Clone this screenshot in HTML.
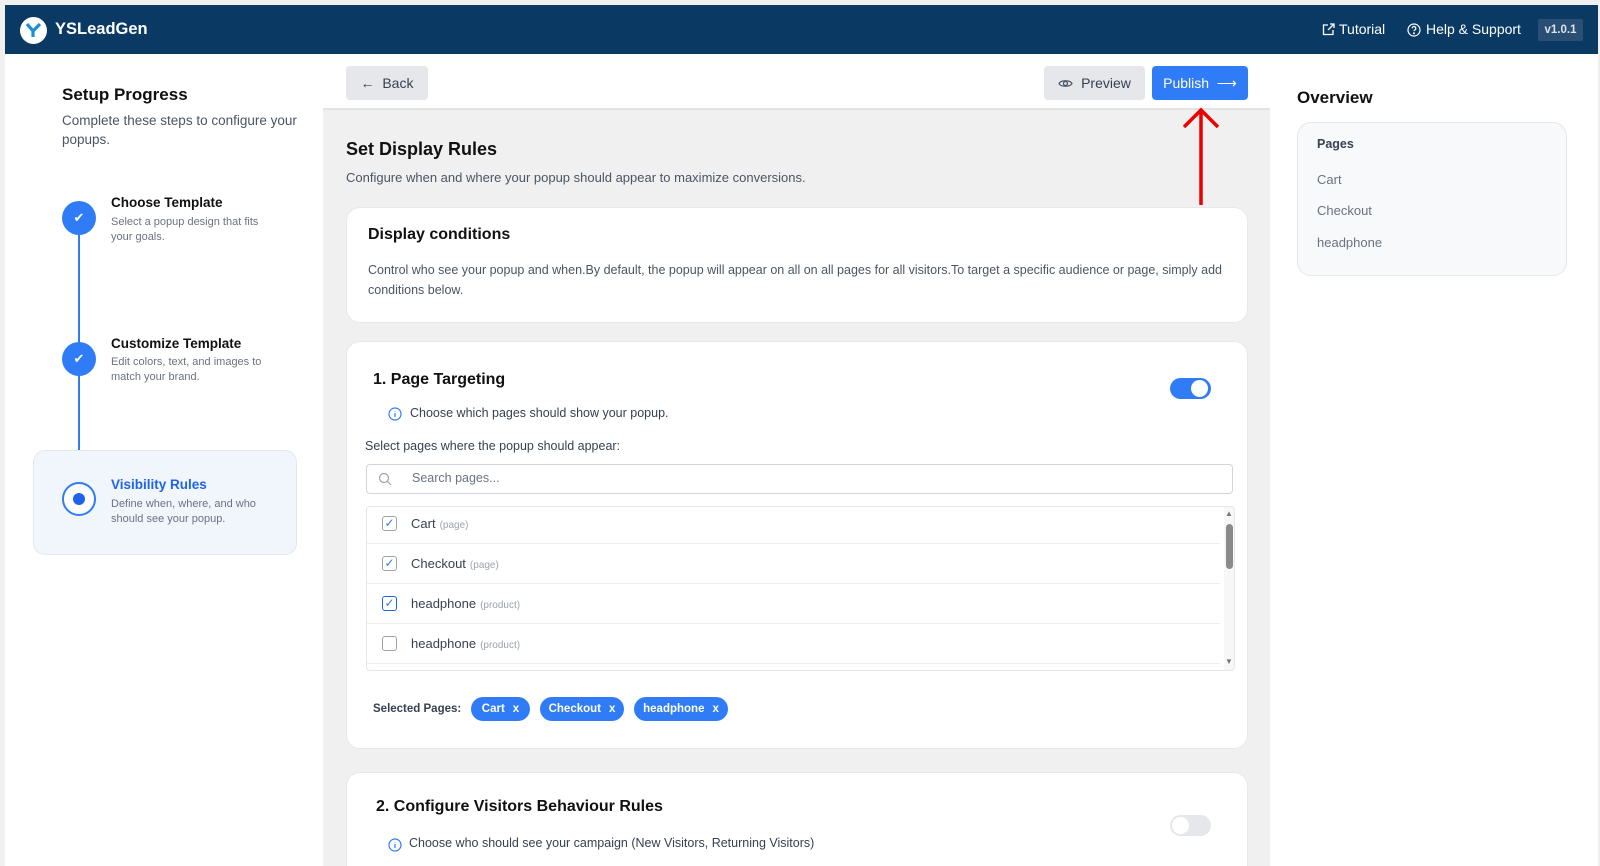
<!DOCTYPE html>
<html><head><meta charset="utf-8"><style>
*{box-sizing:border-box;margin:0;padding:0}
html,body{width:1600px;height:866px;overflow:hidden}
body{background:#f0f0f0;font-family:"Liberation Sans",sans-serif;position:relative;color:#1f2937}
.a{position:absolute}
.hdr{left:5px;top:5px;width:1593px;height:49px;background:#0a3a64}
.side{left:5px;top:54px;width:318px;height:812px;background:#fff}
.main{left:323px;top:54px;width:947px;height:812px;background:#f0f0f0}
.topbar{left:323px;top:54px;width:947px;height:56px;background:#fff;border-bottom:2px solid #e3e3e3}
.right{left:1270px;top:54px;width:328px;height:812px;background:#fff}
.card{background:#fff;border-radius:14px;border:1px solid #e8e8e8}
.btn{border-radius:4px;font-size:14px;display:flex;align-items:center;justify-content:center}
.circ{width:34px;height:34px;border-radius:50%;background:#2f7cf6;color:#fff;font-size:13px;display:flex;align-items:center;justify-content:center}
.st{font-size:13.5px;font-weight:bold;color:#111}
.sd{font-size:11px;color:#6b7280;line-height:15px}
.row{left:0;width:853px;height:40px;border-bottom:1px solid #eee}
.cb{left:15px;top:12px;width:15px;height:15px;border:1.5px solid #9ca3af;border-radius:3px;font-size:12px;color:#2f7cf6;line-height:12px;text-align:center}
.rt{left:44px;top:12px;font-size:13px;color:#374151}
.rt small{font-size:10px;color:#9ca3af;margin-left:4px}
.chip{height:24px;border-radius:12px;background:#2f7cf6;color:#fff;font-size:11.5px;font-weight:bold;top:697px;display:flex;align-items:center;justify-content:center;gap:8px}
</style></head><body>
<div class="a hdr"></div>
<div class="a" style="left:20px;top:17px;width:27px;height:27px;border-radius:50%;background:#fff"></div>
<svg class="a" style="left:24px;top:21px" width="19" height="19" viewBox="0 0 19 19"><path d="M3 3 L9 10 L9 16 M16 3 L9 10" stroke="#1a8fd8" stroke-width="3.2" fill="none"/></svg>
<div class="a" style="left:55px;top:20px;color:#fff;font-size:16.5px;font-weight:bold">YSLeadGen</div>
<svg class="a" style="left:1322px;top:23px" width="13" height="13" viewBox="0 0 13 13" fill="none" stroke="#fff" stroke-width="1.3"><path d="M6 2H1.5v9.5H11V7M8 1h4v4M12 1L6 7"/></svg>
<div class="a" style="left:1339px;top:21px;color:#fff;font-size:14px">Tutorial</div>
<svg class="a" style="left:1407px;top:23px" width="14" height="14" viewBox="0 0 14 14" fill="none" stroke="#fff" stroke-width="1.2"><circle cx="7" cy="7" r="6"/><path d="M5.2 5.3a1.8 1.8 0 1 1 2.5 1.7c-.5.2-.7.6-.7 1.1"/><circle cx="7" cy="10.3" r=".4" fill="#fff"/></svg>
<div class="a" style="left:1426px;top:21px;color:#fff;font-size:14px">Help &amp; Support</div>
<div class="a" style="left:1538px;top:19px;width:45px;height:22px;background:#2a4f75;color:#dbe3ec;font-size:11.5px;font-weight:bold;display:flex;align-items:center;justify-content:center;border-radius:2px">v1.0.1</div>

<div class="a side"></div>
<div class="a" style="left:62px;top:85px;font-size:17px;font-weight:bold;color:#111">Setup Progress</div>
<div class="a" style="left:62px;top:111px;width:235px;font-size:13.5px;color:#4b5563;line-height:19px">Complete these steps to configure your popups.</div>
<div class="a" style="left:78px;top:217px;width:2px;height:282px;background:#2f7cf6"></div>
<div class="a" style="left:33px;top:450px;width:264px;height:105px;border-radius:12px;background:#f1f6fd;border:1px solid #e3e8ef"></div>
<div class="a circ" style="left:62px;top:201px">✔</div>
<div class="a circ" style="left:62px;top:342px">✔</div>
<div class="a" style="left:62px;top:482px;width:34px;height:34px;border-radius:50%;background:#fff;border:2px solid #2f7cf6"></div>
<div class="a" style="left:73px;top:493px;width:12px;height:12px;border-radius:50%;background:#1f63e8"></div>
<div class="a st" style="left:111px;top:195px">Choose Template</div>
<div class="a sd" style="left:111px;top:215px;width:160px">Select a popup design that fits your goals.</div>
<div class="a st" style="left:111px;top:336px">Customize Template</div>
<div class="a sd" style="left:111px;top:355px;width:170px">Edit colors, text, and images to match your brand.</div>
<div class="a st" style="left:111px;top:477px;color:#1f63e8">Visibility Rules</div>
<div class="a sd" style="left:111px;top:497px;width:160px">Define when, where, and who should see your popup.</div>

<div class="a main"></div>
<div class="a topbar"></div>
<div class="a btn" style="left:346px;top:66px;width:82px;height:34px;background:#e5e7eb;color:#374151">← &nbsp;Back</div>
<div class="a btn" style="left:1044px;top:66px;width:101px;height:34px;background:#e5e7eb;color:#374151"><svg width="15" height="11" viewBox="0 0 15 11" fill="none" stroke="#4b5563" stroke-width="1.3" style="margin-right:8px"><path d="M1 5.5C3 1.8 12 1.8 14 5.5 12 9.2 3 9.2 1 5.5Z"/><circle cx="7.5" cy="5.5" r="2"/></svg>Preview</div>
<div class="a btn" style="left:1152px;top:66px;width:96px;height:34px;background:#2f7cf6;color:#fff">Publish &nbsp;⟶</div>
<svg class="a" style="left:1180px;top:104px" width="44" height="102" viewBox="0 0 44 102" fill="none" stroke="#e00" stroke-width="3.5"><path d="M21 101V5M4 23L21 6 38 23"/></svg>

<div class="a" style="left:346px;top:139px;font-size:18px;font-weight:bold;color:#111">Set Display Rules</div>
<div class="a" style="left:346px;top:170px;font-size:13px;color:#4b5563">Configure when and where your popup should appear to maximize conversions.</div>

<div class="a card" style="left:346px;top:207px;width:902px;height:116px"></div>
<div class="a" style="left:368px;top:226px;font-size:16px;font-weight:bold;color:#111">Display conditions</div>
<div class="a" style="left:368px;top:260px;width:870px;font-size:12.5px;color:#4b5563;line-height:20px">Control who see your popup and when.By default, the popup will appear on all on all pages for all visitors.To target a specific audience or page, simply add conditions below.</div>

<div class="a card" style="left:346px;top:341px;width:902px;height:408px"></div>
<div class="a" style="left:373px;top:371px;font-size:16px;font-weight:bold;color:#111">1. Page Targeting</div>
<div class="a" style="left:1170px;top:378px;width:41px;height:21px;border-radius:11px;background:#2f7cf6"></div>
<div class="a" style="left:1191px;top:380px;width:17px;height:17px;border-radius:50%;background:#fff"></div>
<svg class="a" style="left:388px;top:407px" width="14" height="14" viewBox="0 0 14 14" fill="none" stroke="#2f7cf6" stroke-width="1.2"><circle cx="7" cy="7" r="6"/><path d="M7 6v4M7 4v.5"/></svg>
<div class="a" style="left:410px;top:406px;font-size:12.5px;color:#374151">Choose which pages should show your popup.</div>
<div class="a" style="left:365px;top:439px;font-size:12.5px;color:#374151">Select pages where the popup should appear:</div>
<div class="a" style="left:366px;top:464px;width:867px;height:30px;border:1px solid #d1d5db;border-radius:4px"></div>
<svg class="a" style="left:378px;top:472px" width="14" height="14" viewBox="0 0 14 14" fill="none" stroke="#9ca3af" stroke-width="1.2"><circle cx="6" cy="6" r="4.5"/><path d="M9.5 9.5L13 13"/></svg>
<div class="a" style="left:412px;top:471px;font-size:12.5px;color:#6b7280">Search pages...</div>
<div class="a" style="left:366px;top:506px;width:869px;height:165px;border:1px solid #e5e7eb;border-radius:4px;overflow:hidden">
 <div class="a row" style="top:-3px"><div class="a cb">✓</div><div class="a rt">Cart<small>(page)</small></div></div>
 <div class="a row" style="top:37px"><div class="a cb">✓</div><div class="a rt">Checkout<small>(page)</small></div></div>
 <div class="a row" style="top:77px"><div class="a cb" style="border-color:#1f63e8">✓</div><div class="a rt">headphone<small>(product)</small></div></div>
 <div class="a row" style="top:117px"><div class="a cb" style="color:transparent">✓</div><div class="a rt">headphone<small>(product)</small></div></div>
 <div class="a" style="left:857px;top:0;width:11px;height:165px;background:#f7f7f7"></div>
 <div class="a" style="left:859px;top:17px;width:7px;height:45px;border-radius:4px;background:#8a8a8a"></div>
 <div class="a" style="left:858px;top:2px;font-size:8px;color:#777">▲</div>
 <div class="a" style="left:858px;top:150px;font-size:8px;color:#777">▼</div>
</div>
<div class="a" style="left:373px;top:703px;font-size:11.5px;font-weight:bold;color:#374151">Selected Pages:</div>
<div class="a chip" style="left:471px;width:59px">Cart <span>x</span></div>
<div class="a chip" style="left:540px;width:84px">Checkout <span>x</span></div>
<div class="a chip" style="left:634px;width:94px">headphone <span>x</span></div>

<div class="a card" style="left:346px;top:772px;width:902px;height:94px;border-bottom:none;border-radius:14px 14px 0 0"></div>
<div class="a" style="left:376px;top:798px;font-size:16px;font-weight:bold;color:#111">2. Configure Visitors Behaviour Rules</div>
<div class="a" style="left:1170px;top:815px;width:41px;height:21px;border-radius:11px;background:#e5e7eb"></div>
<div class="a" style="left:1172px;top:817px;width:17px;height:17px;border-radius:50%;background:#fff"></div>
<svg class="a" style="left:388px;top:838px" width="14" height="14" viewBox="0 0 14 14" fill="none" stroke="#2f7cf6" stroke-width="1.2"><circle cx="7" cy="7" r="6"/><path d="M7 6v4M7 4v.5"/></svg>
<div class="a" style="left:409px;top:836px;font-size:12.5px;color:#374151">Choose who should see your campaign (New Visitors, Returning Visitors)</div>

<div class="a right"></div>
<div class="a" style="left:1297px;top:88px;font-size:17px;font-weight:bold;color:#111">Overview</div>
<div class="a" style="left:1297px;top:122px;width:270px;height:154px;border-radius:14px;background:#f8f9fb;border:1px solid #e5e7eb"></div>
<div class="a" style="left:1317px;top:137px;font-size:12.5px;font-weight:bold;color:#374151">Pages</div>
<div class="a" style="left:1317px;top:172px;font-size:13px;color:#6b7280">Cart</div>
<div class="a" style="left:1317px;top:203px;font-size:13px;color:#6b7280">Checkout</div>
<div class="a" style="left:1317px;top:235px;font-size:13px;color:#6b7280">headphone</div>
</body></html>
